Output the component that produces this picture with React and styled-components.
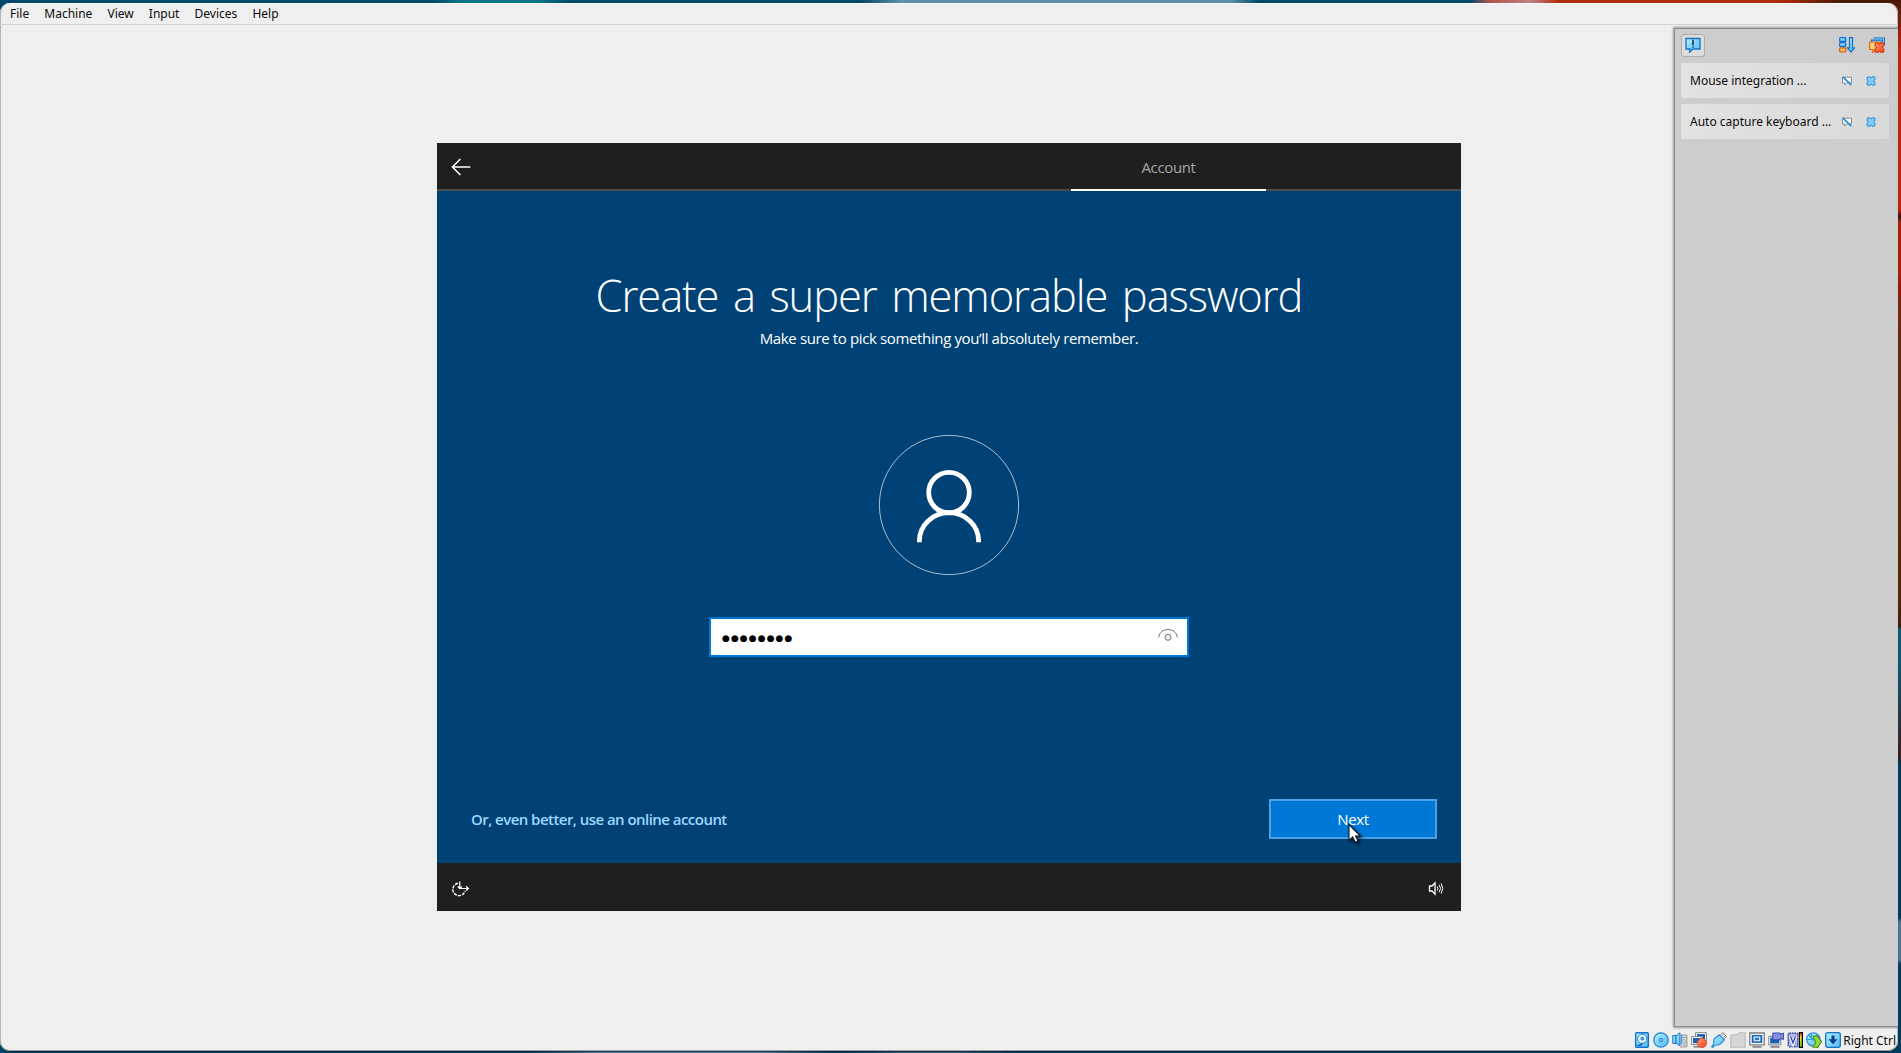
import React from "react";
import styled, { createGlobalStyle } from "styled-components";

const Global = createGlobalStyle`
  * { box-sizing: border-box; }
  html, body { margin: 0; height: 100%; overflow: hidden; }
  body { font-family: "Noto Sans", "Open Sans", sans-serif; color: #0c0c0c; }
  button { font: inherit; border: 0; background: none; padding: 0; }
  svg { display: block; flex: none; }
`;

const Desktop = styled.div`
  width: 1901px;
  height: 1053px;
  padding: 3px 3px 3px 0;
  background:
    linear-gradient(90deg, transparent 0 430px, #087487 460px 540px, transparent 570px 860px, #5f8fa6 900px 1230px, transparent 1260px 1470px, #b5554a 1490px, #c08088 1530px, #b02c08 1560px 1780px, #4a1a08 1840px) 0 0 / 100% 3px no-repeat,
    linear-gradient(90deg, transparent 0 530px, #4f7f9a 600px 760px, transparent 830px 850px, #2a6078 900px 960px, transparent 1010px) 0 100% / 100% 3px no-repeat,
    linear-gradient(180deg, #4a1a08 0, #b82a05 50px 210px, #3a1206 216px, #a82404 222px 270px, #8a2004 290px, #6a2c08 340px, #5a2504 600px, #40200c 626px, #056080 630px 658px, #3a1c20 756px, #003c5e 764px 918px, #4a7894 922px 960px, #003c5e 964px) 100% 0 / 12px 100% no-repeat,
    #00486a;
`;

const Window = styled.div`
  height: 1048px;
  display: flex;
  flex-direction: column;
  background: #efefef;
  border-radius: 10px;
  overflow: hidden;
  box-shadow: inset 1px 0 0 #b4b4b4, inset 0 -1px 0 #a2a2a2, inset -1px 0 0 #b4b4b4, inset 0 1px 0 #fafafa, 0 1px 1px #0008;
`;

const MenuBar = styled.nav`
  height: 22px;
  flex: none;
  display: flex;
  align-items: center;
  gap: 15.1px;
  padding: 1px 0 0 10px;
  border-bottom: 1px solid #d2d2d2;
  font-size: 12px;
  line-height: 18px;
`;

const Workspace = styled.main`
  height: 1003px;
  flex: none;
  display: grid;
  grid-template-columns: 1fr 224px;
  grid-template-rows: 100%;
`;

const Stage = styled.section`
  grid-area: 1 / 1 / 2 / 3;
  display: flex;
  justify-content: center;
  padding-top: 118px;
`;

const Guest = styled.div`
  width: 1024px;
  height: 768px;
  display: flex;
  flex-direction: column;
  background: #004275;
  color: #fff;
  font-family: "Open Sans", "Noto Sans", sans-serif;
`;

const GuestHeader = styled.header`
  height: 48px;
  flex: none;
  display: flex;
  justify-content: space-between;
  background: #1f1f1f;
  box-shadow: inset 0 -2px 0 #4c4c4c;
  padding: 0 195px 0 14px;
`;

const BackButton = styled.button`
  display: flex;
  align-items: center;
`;

const Tab = styled.div`
  width: 195px;
  border-bottom: 2px solid #fff;
  color: #a5a5a5;
  text-align: center;
  font-size: 15px;
  line-height: 48px;
  letter-spacing: -0.35px;
`;

const GuestBody = styled.div`
  flex: 1;
  display: flex;
  flex-direction: column;
  align-items: center;
`;

const Title = styled.h1`
  margin: 73px 0 0;
  font-size: 43.5px;
  font-weight: 300;
  line-height: 64px;
  letter-spacing: -1.08px;
  word-spacing: 4.3px;
  white-space: nowrap;
`;

const Subtitle = styled.p`
  margin: 0;
  font-size: 15px;
  line-height: 20px;
  letter-spacing: -0.37px;
  white-space: nowrap;
`;

const Avatar = styled.div`
  margin-top: 86px;
  width: 142px;
  height: 142px;
`;

const PasswordField = styled.div`
  width: 480px;
  height: 40px;
  margin-top: 41px;
  padding: 0 9px 0 11px;
  display: flex;
  align-items: center;
  justify-content: space-between;
  background: #fff;
  border: 2px solid #0078d7;
  color: #000;

  svg { margin-bottom: 4px; }
`;

const Mask = styled.span`
  font-family: "DejaVu Sans", sans-serif;
  font-size: 9px;
  line-height: 20px;
  letter-spacing: 1.08px;
  padding-top: 1px;
`;

const Actions = styled.div`
  width: 100%;
  margin-top: 142px;
  padding: 0 24px 0 34px;
  display: flex;
  align-items: center;
  justify-content: space-between;
`;

const AccountLink = styled.a`
  color: #9dd7ff;
  font-size: 15px;
  font-weight: 600;
  letter-spacing: -0.54px;
`;

const NextButton = styled.button`
  position: relative;
  width: 168px;
  height: 40px;
  background: #0078d7;
  border: 2px solid #4ca0e6;
  color: #fff;
  font-size: 15px;
  letter-spacing: -0.3px;
`;

const Pointer = styled.svg`
  position: absolute;
  left: 77px;
  top: 22px;
  filter: drop-shadow(2px 2px 1.5px #0009);
`;

const GuestFooter = styled.footer`
  height: 48px;
  flex: none;
  display: flex;
  align-items: center;
  justify-content: space-between;
  padding: 3px 17px 0 14px;
  background: #1f1f1f;
`;

const Panel = styled.aside`
  grid-area: 1 / 2 / 2 / 3;
  margin: 3px 0 1px;
  padding: 5px 9px 0 6px;
  z-index: 1;
  background: #cdcdcd;
  border: 1px solid #8c8c8c;
  border-right: 0;
  box-shadow: 0 0 2px 1px #999;
  display: flex;
  flex-direction: column;
  gap: 6px;
`;

const PanelTools = styled.div`
  height: 23px;
  display: flex;
  align-items: center;
  gap: 14px;
  padding-right: 4px;

  > svg { margin-bottom: 2px; }
`;

const Toggle = styled.button`
  width: 24px;
  height: 23px;
  margin-right: auto;
  padding-bottom: 1px;
  display: grid;
  place-items: center;
  background: #dcdcdc;
  border: 1px solid #adadad;
  border-radius: 3px;
`;

const Notice = styled.article`
  height: 35px;
  display: flex;
  align-items: center;
  gap: 14px;
  padding: 0 13px 0 9px;
  background: linear-gradient(100deg, #e2e2e2, #d9d9d9);
  font-size: 12px;
`;

const NoticeText = styled.span`
  flex: 1;
  min-width: 0;
  white-space: nowrap;
`;

const StatusBar = styled.footer`
  flex: 1;
  display: flex;
  align-items: center;
  justify-content: flex-end;
  gap: 3.1px;
  padding: 1px 2px 0 0;
  font-size: 12px;
`;

const HostKey = styled.span`
  margin-left: -1px;
  white-space: nowrap;
`;

const Defs = () => (
  <svg width="0" height="0">
    <defs>
      <linearGradient id="cyan" x1="0" y1="0" x2="1" y2="1">
        <stop offset="0" stopColor="#b4f0ff" />
        <stop offset="1" stopColor="#4fb8f8" />
      </linearGradient>
      <linearGradient id="red" x1="0" y1="0" x2="1" y2="1">
        <stop offset="0" stopColor="#ff9a70" />
        <stop offset="1" stopColor="#f0441c" />
      </linearGradient>
      <linearGradient id="heat" x1="0" y1="0" x2="0" y2="1">
        <stop offset="0" stopColor="#ff3010" />
        <stop offset=".35" stopColor="#ffe020" />
        <stop offset="1" stopColor="#20d820" />
      </linearGradient>
    </defs>
  </svg>
);

const Icon = ({ size = 16, children }) => (
  <svg width={size} height={size} viewBox={`0 0 ${size} ${size}`} fill="none">{children}</svg>
);

const cross = "M2 1 4 .6 5.5 2 7 .6 9.3 1 9.5 3.3 8.2 5 9.5 6.7 9.2 9 7 9.4 5.5 8 4 9.4 1.8 9 1.5 6.7 2.8 5 1.5 3.3Z";

const BubbleIcon = () => (
  <Icon>
    <path d="M1 1.5h14v10.5H8L4.5 15.2 5 12H1Z" fill="url(#cyan)" stroke="#1471c8" strokeWidth="1.3" />
    <path d="M8 2.8v5.6M8 9.6v1.2" stroke="#000" strokeWidth="1.2" />
  </Icon>
);

const SortIcon = () => (
  <Icon>
    <rect x=".7" y=".7" width="6" height="3.8" rx=".8" fill="url(#cyan)" stroke="#1471c8" strokeWidth="1.3" />
    <rect x=".7" y="5.7" width="6" height="3.8" rx=".8" fill="url(#cyan)" stroke="#1471c8" strokeWidth="1.3" />
    <rect x=".7" y="10.8" width="6" height="4" rx=".8" fill="#ffc35c" stroke="#e06010" strokeWidth="1.3" />
    <path d="M10.5.7h3v10.2h2L12 15 8.5 10.9h2Z" fill="url(#cyan)" stroke="#1471c8" strokeWidth="1.2" />
  </Icon>
);

const ClearAllIcon = () => (
  <Icon>
    <path d="M4.5 1h11v7" fill="#8edcff" stroke="#1471c8" strokeWidth="1.2" />
    <path d="M2.5 3.2h10.8V9H2.5Z" fill="#8edcff" stroke="#1471c8" strokeWidth="1.2" />
    <path d="M.7 5h11v7.5H7L4 15.3V12.5H.7Z" fill="#ffd27a" stroke="#e0600c" strokeWidth="1.2" />
    <path transform="translate(4.3 4.9) scale(1.12)" d={cross} fill="url(#red)" stroke="#d93a10" strokeWidth="1" />
  </Icon>
);

const MuteIcon = () => (
  <Icon size={10}>
    <path d="M.5 1.2h9v5.6H5L2.7 9V6.8H.5Z" fill="#f8f8f8" stroke="#8b8b8b" />
    <path d="M.8.8 9.3 9.2" stroke="#2391e0" strokeWidth="1.8" />
  </Icon>
);

const CloseIcon = () => (
  <Icon size={10}>
    <path transform="translate(-.5 0)" d={cross} fill="#7fcdfa" stroke="#2488d8" />
  </Icon>
);

const statusIcons = [
  <Icon key="disk">
    <rect x="1.7" y=".7" width="12.6" height="14.6" rx="1" fill="url(#cyan)" stroke="#1471c8" strokeWidth="1.4" />
    <circle cx="8.2" cy="6.8" r="4.6" fill="#effcff" stroke="#2d86d2" />
    <circle cx="8.4" cy="6.6" r="1.5" fill="#5cb8f0" stroke="#1471c8" />
    <path d="M3.5 13.2h3l2-2.2" stroke="#0d5cae" strokeWidth="1.6" />
  </Icon>,
  <Icon key="optical">
    <circle cx="8" cy="8" r="7.2" fill="url(#cyan)" stroke="#1f7fd0" strokeWidth="1.2" />
    <circle cx="8" cy="8" r="1.8" fill="#d8f6ff" stroke="#1f7fd0" />
    <circle cx="8" cy="8" r=".7" fill="#0a5aa8" />
  </Icon>,
  <Icon key="audio">
    <path d="M9 3h6v12H8" fill="#d4d4d4" stroke="#a0a0a0" />
    <path d="M11 5.5h4M11 8h4M11 10.5h4M11 13h4" stroke="#a5a5a5" />
    <path d="M.8 3.5h3v8h-3Z" fill="#8ce0ff" stroke="#1471c8" />
    <path d="M4 4 8 .8v13L4 11Z" fill="url(#cyan)" stroke="#1471c8" />
    <path d="M9.7 3v9" stroke="#3b9de4" strokeWidth="1.2" />
  </Icon>,
  <Icon key="network">
    <path d="M4.6.7h10.8v8H4.6Z" fill="#fff" stroke="#808080" />
    <path d="M6 2.1h8v5.2H6Z" fill="#1b5fb4" />
    <path d="M.6 4.6h10.6v8H.6Z" fill="#fff" stroke="#808080" />
    <path d="M2 6h7.8v5.2H2Z" fill="#1b5fb4" />
    <path d="M2.5 14.8h7" stroke="#808080" strokeWidth="1.5" />
    <circle cx="11" cy="11" r="4.6" fill="url(#red)" stroke="#d8401c" strokeWidth=".8" />
  </Icon>,
  <Icon key="usb">
    <path d="m8.8 3.8 3-3.2 3.7 3.6-3.2 3.2Z" fill="#f6f6f6" stroke="#777" />
    <path d="M11.8 2.6v1M13.4 4v1" stroke="#555" />
    <path d="M3 7 8.2 2.8 13.4 7.8 8.4 12.8 4.2 13.2 1.4 15.5.6 14.6 2.6 12Z" fill="url(#cyan)" stroke="#1f86d4" strokeWidth="1.1" strokeLinejoin="round" />
  </Icon>,
  <Icon key="folder">
    <path d="M.7 4 2.5 2.8h5L9.3.8h5.9v14.4H.7Z" fill="#d6d6d6" stroke="#bcbcbc" strokeWidth="1.1" />
  </Icon>,
  <Icon key="display">
    <path d="M.8 1h14.4v11.8H.8Z" fill="#fff" stroke="#7c7c7c" strokeWidth="1.3" />
    <path d="M2.7 2.9h10.6v8H2.7Z" fill="#1a66bc" />
    <path d="M5.2 5h5.6v3.8H5.2Z" fill="#2b7cd0" stroke="#fff" strokeWidth="1.1" />
    <path d="M3.5 14.9h9" stroke="#7c7c7c" strokeWidth="1.6" />
  </Icon>,
  <Icon key="recording">
    <path d="M.8 4.3h12v8.6H.8Z" fill="#fff" stroke="#7c7c7c" />
    <path d="M2.2 5.6h9.2v5.9H2.2Z" fill="#1160b4" />
    <path d="M2.5 14.9h9" stroke="#7c7c7c" strokeWidth="1.6" />
    <path d="M4.8 1h7.4v1.6L15.4 1v6.6l-3.2-1.6v1.8H4.8Z" fill="#8890e4" stroke="#3d48a8" />
  </Icon>,
  <Icon key="processor">
    <rect x="1.3" y="1.3" width="9.4" height="13.4" rx="1" fill="#a5b4f0" stroke="#4350a8" strokeWidth="1.5" strokeDasharray="1.8 .7" />
    <path d="m3.2 4 2.8 7.5L8.8 4" stroke="#fff" strokeWidth="3" />
    <path d="m3.5 4.2 2.5 6.6 2.5-6.6" stroke="#3443a0" strokeWidth="1.3" />
    <rect x="12.4" y=".6" width="3" height="14.8" fill="url(#heat)" stroke="#000" strokeWidth="1.2" />
  </Icon>,
  <Icon key="mouse">
    <circle cx="7.3" cy="7.5" r="6.7" fill="url(#cyan)" stroke="#1f86d4" strokeWidth="1.1" />
    <path d="m3 3.5 5 5M5.5 1.5v6h-5" stroke="#2f9be4" strokeWidth="1.2" />
    <path d="M7 4.2 10.8 3.6 15.4 9.4 11.8 15.4 6.6 15 9.9 10.6Z" fill="#9ed63c" stroke="#3f9018" strokeWidth="1.1" />
  </Icon>,
  <Icon key="keyboard">
    <rect x=".7" y=".7" width="14.6" height="14.6" rx="2" fill="url(#cyan)" stroke="#1471c8" strokeWidth="1.3" />
    <path d="M6.5 3.5h3v3.7h3L8 12.2 3.5 7.2h3Z" fill="#0b3f86" />
  </Icon>,
];

const notices = ["Mouse integration ...", "Auto capture keyboard ..."];

export default function App() {
  return (
    <Desktop>
      <Global />
      <Window>
        <MenuBar>
          {["File", "Machine", "View", "Input", "Devices", "Help"].map((m) => <span key={m}>{m}</span>)}
        </MenuBar>
        <Workspace>
          <Stage>
            <Guest>
              <GuestHeader>
                <BackButton aria-label="Back">
                  <svg width="21" height="18" viewBox="0 0 21 18" fill="none" stroke="#fff" strokeWidth="1.5">
                    <path d="M1.2 9H19.3M9.4 1 1.4 9l8 8" />
                  </svg>
                </BackButton>
                <Tab>Account</Tab>
              </GuestHeader>
              <GuestBody>
                <Title>Create a super memorable password</Title>
                <Subtitle>Make sure to pick something you’ll absolutely remember.</Subtitle>
                <Avatar>
                  <svg width="142" height="142" viewBox="0 0 142 142" fill="none" stroke="#fff">
                    <circle cx="71" cy="71" r="69.6" strokeOpacity=".65" />
                    <circle cx="71" cy="58.6" r="20.3" strokeWidth="4.8" />
                    <path d="M41.4 108.3V107a29.6 28.3 0 0 1 59.2 0v1.3" strokeWidth="4.8" />
                  </svg>
                </Avatar>
                <PasswordField>
                  <Mask>●●●●●●●●</Mask>
                  <svg width="20" height="14" viewBox="0 0 20 14" fill="none" stroke="#6b6b6b">
                    <path d="M.7 9.4C1.5 4 5 1.6 10 1.6S18.5 4 19.3 9.4" />
                    <circle cx="10" cy="9.3" r="3" />
                  </svg>
                </PasswordField>
                <Actions>
                  <AccountLink>Or, even better, use an online account</AccountLink>
                  <NextButton>
                    Next
                    <Pointer width="14" height="21" viewBox="0 0 14 21">
                      <path d="M1 1.5V17.5L4.7 14 7.3 19.3 10 18.1 7.6 13H12.4Z" fill="#fff" stroke="#10141c" strokeWidth="1.1" />
                    </Pointer>
                  </NextButton>
                </Actions>
              </GuestBody>
              <GuestFooter>
                <svg width="20" height="18" viewBox="0 0 20 18" fill="none" stroke="#fff" strokeWidth="1.4">
                  <path d="M7 3.3A6.2 6.2 0 1 0 14 11" strokeDasharray="3.2 1" />
                  <path d="M8.8 1.5V8.5H17.5M15 6.3l2.4 2.2L15 10.7M6.8 6.5l2 2.2 2-2.2" strokeWidth="1.2" />
                </svg>
                <svg width="17" height="15" viewBox="0 0 17 15" fill="none" stroke="#fff" strokeWidth="1.3">
                  <path d="M2.5 5v5h2.5L8 13.2V1.8L5 5Z" />
                  <path d="M10.2 5.5q1.4 2 0 4M12.2 3.8q2.6 3.7 0 7.4M14.2 2.5q3 5 0 10" strokeWidth="1" />
                </svg>
              </GuestFooter>
            </Guest>
          </Stage>
          <Panel>
            <PanelTools>
              <Toggle aria-label="Notifications"><BubbleIcon /></Toggle>
              <SortIcon />
              <ClearAllIcon />
            </PanelTools>
            {notices.map((n) => (
              <Notice key={n}>
                <NoticeText>{n}</NoticeText>
                <MuteIcon />
                <CloseIcon />
              </Notice>
            ))}
          </Panel>
        </Workspace>
        <StatusBar>
          {statusIcons}
          <HostKey>Right Ctrl</HostKey>
        </StatusBar>
      </Window>
      <Defs />
    </Desktop>
  );
}
